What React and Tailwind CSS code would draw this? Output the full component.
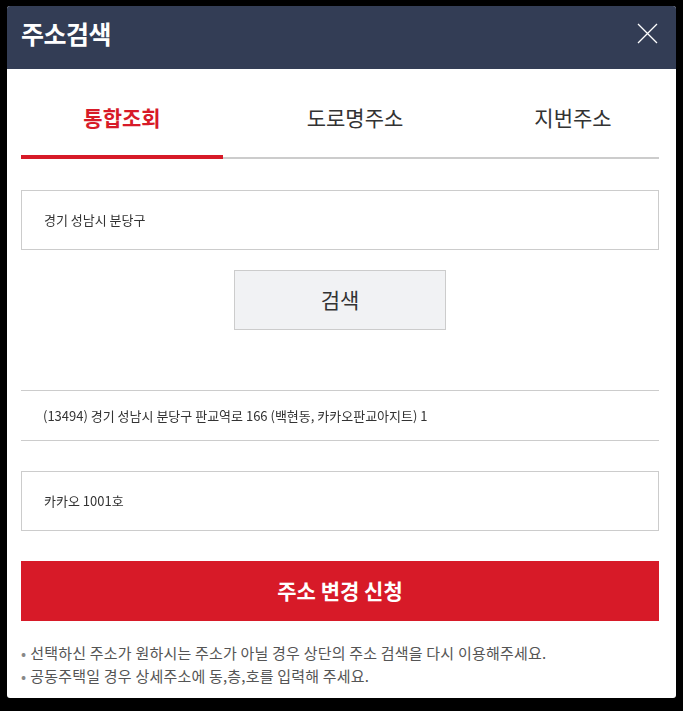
import React, { useState } from "react";

const font = { fontFamily: '"Noto Sans CJK KR", "Noto Sans", sans-serif' };

const tabs = [
  { label: "통합조회", width: "w-[202px]" },
  { label: "도로명주소", width: "w-[264px]" },
  { label: "지번주소", width: "flex-1" },
];

export default function App() {
  const [active, setActive] = useState(0);

  return (
    <div className="w-[683px] h-[711px] bg-black pt-[6px] pl-[7px] pr-[7px]" style={font}>
      <div className="w-[669px] h-[692px] bg-white rounded-[3px] overflow-hidden flex flex-col">
        {/* 헤더 */}
        <div className="h-[63px] bg-[#333d55] flex items-start justify-between pl-[14px] pr-[18px] pt-[12px]">
          <h1 className="text-[25px] leading-[30px] font-bold text-white tracking-[-0.5px]">주소검색</h1>
          <button className="w-[22px] h-[22px] mt-[4px] flex items-center justify-center">
            <svg width="21" height="21" viewBox="0 0 21 21" fill="none">
              <path d="M1 1L20 20M20 1L1 20" stroke="white" strokeWidth="1.3" />
            </svg>
          </button>
        </div>

        <div className="pl-[14px] pr-[17px] flex flex-col">
          {/* 탭 */}
          <div className="flex border-b-2 border-[#cccccc] h-[90px]">
            {tabs.map((tab, i) => (
              <button
                key={tab.label}
                onClick={() => setActive(i)}
                className={`${tab.width} flex items-center justify-center text-[21px] -mb-[2px] pt-[12px] ${
                  active === i
                    ? "text-[#d71a28] font-bold border-b-4 border-[#d71a28]"
                    : "text-[#333333] border-b-4 border-transparent"
                }`}
              >
                {tab.label}
              </button>
            ))}
          </div>

          {/* 검색 입력 */}
          <div className="mt-[31px] h-[60px] border border-[#cccccc] flex items-center px-[22px]">
            <span className="text-[13px] text-[#333] blur-[0.6px]">경기 성남시 분당구</span>
          </div>

          <div className="flex justify-center mt-[20px]">
            <button className="w-[212px] h-[60px] bg-[#f1f2f4] border border-[#cccccc] text-[21px] text-[#333]">
              검색
            </button>
          </div>

          {/* 검색 결과 */}
          <div className="mt-[60px] h-[51px] border-t border-b border-[#cccccc] flex items-center px-[22px]">
            <span className="text-[13px] text-[#333] blur-[0.6px]">
              (13494) 경기 성남시 분당구 판교역로 166 (백현동, 카카오판교아지트) 1
            </span>
          </div>

          {/* 상세주소 */}
          <div className="mt-[30px] h-[60px] border border-[#cccccc] flex items-center px-[22px]">
            <span className="text-[13px] text-[#333] blur-[0.6px]">카카오 1001호</span>
          </div>

          <button className="mt-[30px] h-[60px] bg-[#d71a28] text-white text-[21px] font-bold">
            주소 변경 신청
          </button>

          <ul className="mt-[20px] text-[15px] text-[#555555] leading-[23px] tracking-[0.2px]">
            <li className="flex gap-[4px]">
              <span className="text-[#888]">•</span>
              선택하신 주소가 원하시는 주소가 아닐 경우 상단의 주소 검색을 다시 이용해주세요.
            </li>
            <li className="flex gap-[4px]">
              <span className="text-[#888]">•</span>
              공동주택일 경우 상세주소에 동,층,호를 입력해 주세요.
            </li>
          </ul>
        </div>
      </div>
    </div>
  );
}
